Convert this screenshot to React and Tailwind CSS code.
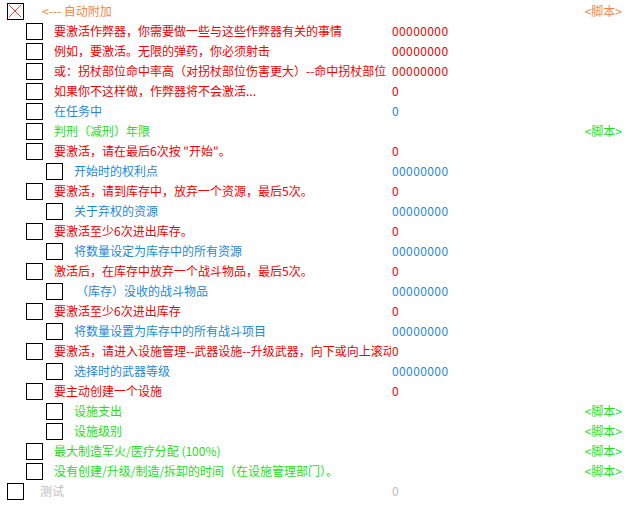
const RED = "text-[#f00000]";
const BLUE = "text-[#1e88d8]";
const GREEN = "text-[#22dd22]";
const ORANGE = "text-[#f0884a]";
const GRAY = "text-[#bdbdbd]";

const rows = [
  { level: 0, text: "<--- 自动附加", color: ORANGE, checked: true, script: ORANGE, wide: true },
  { level: 1, text: "要激活作弊器，你需要做一些与这些作弊器有关的事情", color: RED, value: "00000000", vcolor: RED },
  { level: 1, text: "例如，要激活。无限的弹药，你必须射击", color: RED, value: "00000000", vcolor: RED },
  { level: 1, text: "或：拐杖部位命中率高（对拐杖部位伤害更大）--命中拐杖部位", color: RED, value: "00000000", vcolor: RED },
  { level: 1, text: "如果你不这样做，作弊器将不会激活...", color: RED, value: "0", vcolor: RED },
  { level: 1, text: "在任务中", color: BLUE, value: "0", vcolor: BLUE },
  { level: 1, text: "判刑（减刑）年限", color: GREEN, script: GREEN },
  { level: 1, text: "要激活，请在最后6次按 \"开始\"。", color: RED, value: "0", vcolor: RED },
  { level: 2, text: "开始时的权利点", color: BLUE, value: "00000000", vcolor: BLUE },
  { level: 1, text: "要激活，请到库存中，放弃一个资源，最后5次。", color: RED, value: "0", vcolor: RED },
  { level: 2, text: "关于弃权的资源", color: BLUE, value: "00000000", vcolor: BLUE },
  { level: 1, text: "要激活至少6次进出库存。", color: RED, value: "0", vcolor: RED },
  { level: 2, text: "将数量设定为库存中的所有资源", color: BLUE, value: "00000000", vcolor: BLUE },
  { level: 1, text: "激活后，在库存中放弃一个战斗物品，最后5次。", color: RED, value: "0", vcolor: RED },
  { level: 2, text: "（库存）没收的战斗物品", color: BLUE, value: "00000000", vcolor: BLUE, pad: true },
  { level: 1, text: "要激活至少6次进出库存", color: RED, value: "0", vcolor: RED },
  { level: 2, text: "将数量设置为库存中的所有战斗项目", color: BLUE, value: "00000000", vcolor: BLUE },
  { level: 1, text: "要激活，请进入设施管理--武器设施--升级武器，向下或向上滚动", color: RED, value: "0", vcolor: RED },
  { level: 2, text: "选择时的武器等级", color: BLUE, value: "00000000", vcolor: BLUE },
  { level: 1, text: "要主动创建一个设施", color: RED, value: "0", vcolor: RED },
  { level: 2, text: "设施支出", color: GREEN, script: GREEN },
  { level: 2, text: "设施级别", color: GREEN, script: GREEN },
  { level: 1, text: "最大制造军火/医疗分配 (100%)", color: GREEN, script: GREEN },
  { level: 1, text: "没有创建/升级/制造/拆卸的时间（在设施管理部门）。", color: GREEN, script: GREEN },
  { level: 0, text: "测试", color: GRAY, value: "0", vcolor: GRAY },
];

const indent = ["pl-[7px]", "pl-[26px]", "pl-[46px]"];
const gap = ["ml-[16px]", "ml-[11px]", "ml-[11px]"];

const Box = ({ checked }) => (
  <div className="w-[17px] h-[17px] shrink-0 border border-black bg-white">
    {checked && (
      <svg viewBox="0 0 17 17" className="w-full h-full">
        <path d="M1 1L15 15M15 1L1 15" stroke="#e02020" strokeWidth="1" fill="none" />
      </svg>
    )}
  </div>
);

const App = () => {
  return (
    <div
      className="w-[629px] h-[516px] bg-white pt-[1px] text-[12px] leading-none"
      style={{ fontFamily: '"Noto Sans CJK SC", "Noto Sans", sans-serif' }}
    >
      {rows.map((r, i) => (
        <div key={i} className="flex items-center h-[20px]">
          <div className={`flex items-center w-[391px] shrink-0 overflow-hidden whitespace-nowrap ${indent[r.level]}`}>
            <Box checked={r.checked} />
            <span className={`${r.wide ? "ml-[18px]" : gap[r.level]} ${r.color} ${r.pad ? "pl-[2px]" : ""}`}>
              {r.text}
            </span>
          </div>
          <div className={`w-[150px] pl-[1px] tracking-[0.4px] ${r.vcolor || ""}`}>{r.value}</div>
          <div className={`flex-1 text-right pr-[7px] ${r.script || ""}`}>
            {r.script ? "<脚本>" : ""}
          </div>
        </div>
      ))}
    </div>
  );
};

export default App;
